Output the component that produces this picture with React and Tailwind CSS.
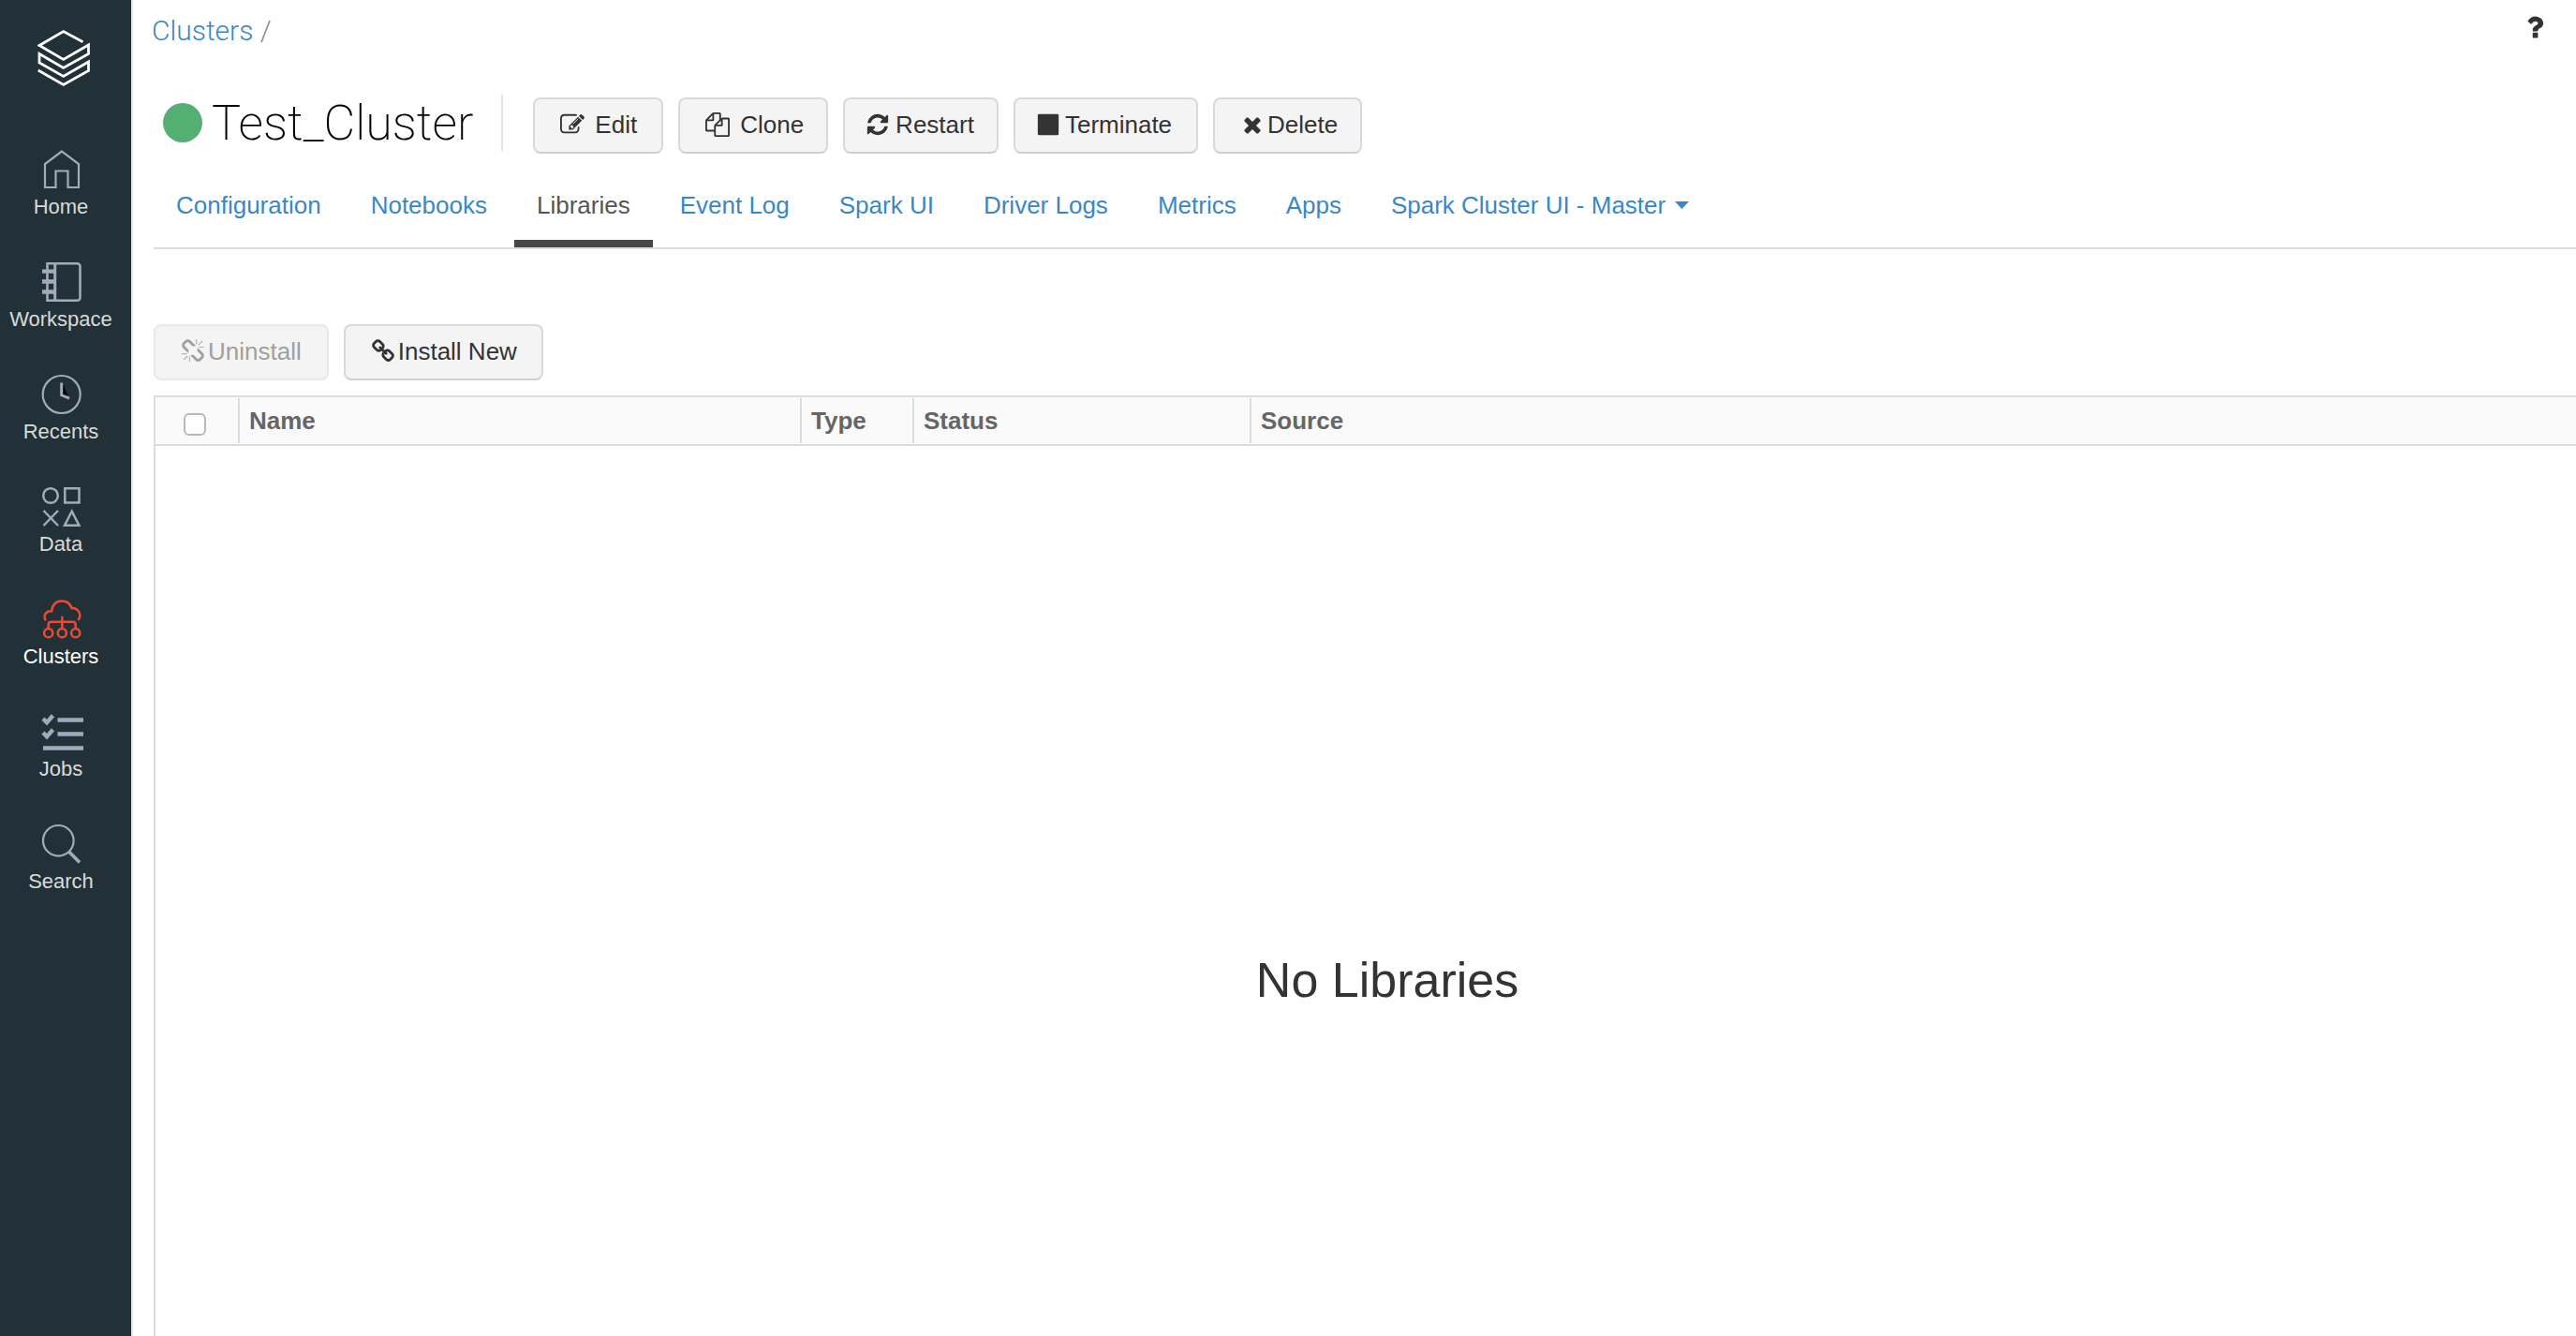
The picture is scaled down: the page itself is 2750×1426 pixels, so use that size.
import React from "react";

/* ---------- icons ---------- */

const glyphs = {
  edit: "M888 1184l116-116-152-152-116 116v56h96v96h56zm440-720q-16-16-33 1l-350 350q-17 17-1 33t33-1l350-350q17-17 1-33zm80 594v190q0 119-84.5 203.5t-203.5 84.5h-832q-119 0-203.5-84.5t-84.5-203.5v-832q0-119 84.5-203.5t203.5-84.5h832q63 0 117 25 15 7 18 23 3 17-9 29l-49 49q-14 14-32 8-23-6-45-6h-832q-66 0-113 47t-47 113v832q0 66 47 113t113 47h832q66 0 113-47t47-113v-126q0-13 9-22l64-64q15-15 35-7t20 29zm-96-738l288 288-672 672h-288v-288zm444 132l-92 92-288-288 92-92q28-28 68-28t68 28l152 152q28 28 28 68t-28 68z",
  clone: "M1696 384q40 0 68 28t28 68v1216q0 40-28 68t-68 28h-960q-40 0-68-28t-28-68v-288h-544q-40 0-68-28t-28-68v-672q0-40 20-88t48-76l408-408q28-28 76-48t88-20h416q40 0 68 28t28 68v328q68-40 128-40h416zm-544 213l-299 299h299v-299zm-640-384l-299 299h299v-299zm196 647l316-316v-416h-384v416q0 40-28 68t-68 28h-416v640h512v-256q0-40 20-88t48-76zm956 804v-1152h-384v416q0 40-28 68t-68 28h-416v640h896z",
  restart: "M1639 1056q0 5-1 7-64 268-268 434.5t-478 166.5q-146 0-282.5-55t-243.5-157l-129 129q-19 19-45 19t-45-19-19-45v-448q0-26 19-45t45-19h448q26 0 45 19t19 45-19 45l-137 137q71 66 161 102t187 36q134 0 250-65t186-179q11-17 53-117 8-23 30-23h192q13 0 22.5 9.5t9.5 22.5zm25-800v448q0 26-19 45t-45 19h-448q-26 0-45-19t-19-45 19-45l138-138q-148-137-349-137-134 0-250 65t-186 179q-11 17-53 117-8 23-30 23h-199q-13 0-22.5-9.5t-9.5-22.5v-7q65-268 270-434.5t480-166.5q146 0 284 55.5t245 156.5l130-129q19-19 45-19t45 19 19 45z",
  stop: "M1664 192v1408q0 26-19 45t-45 19h-1408q-26 0-45-19t-19-45v-1408q0-26 19-45t45-19h1408q26 0 45 19t19 45z",
  times: "M1490 1322q0 40-28 68l-136 136q-28 28-68 28t-68-28l-294-294-294 294q-28 28-68 28t-68-28l-136-136q-28-28-28-68t28-68l294-294-294-294q-28-28-28-68t28-68l136-136q28-28 68-28t68 28l294 294 294-294q28-28 68-28t68 28l136 136q28 28 28 68t-28 68l-294 294 294 294q28 28 28 68z",
  link: "M1520 1216q0-40-28-68l-208-208q-28-28-68-28-42 0-72 32 3 3 19 18.5t21.5 21.5 15 19 13 25.5 3.5 27.5q0 40-28 68t-68 28q-15 0-27.5-3.5t-25.5-13-19-15-21.5-21.5-18.5-19q-33 31-33 73 0 40 28 68l206 207q27 27 68 27 40 0 68-26l147-146q28-28 28-67zm-703-705q0-40-28-68l-206-207q-28-28-68-28-39 0-68 27l-147 146q-28 28-28 67 0 40 28 68l208 208q27 27 68 27 42 0 72-31-3-3-19-18.5t-21.5-21.5-15-19-13-25.5-3.5-27.5q0-40 28-68t68-28q15 0 27.5 3.5t25.5 13 19 15 21.5 21.5 18.5 19q33-31 33-73zm895 705q0 120-85 203l-147 146q-83 83-203 83-121 0-204-85l-206-207q-83-83-83-203 0-123 88-209l-88-88q-86 88-208 88-120 0-204-84l-208-208q-84-84-84-204t85-203l147-146q83-83 203-83 121 0 204 85l206 207q83 83 83 203 0 123-88 209l88 88q86-88 208-88 120 0 204 84l208 208q84 84 84 204z",
  unlink: "M503 1271l-256 256q-10 9-23 9-12 0-23-9-9-10-9-23t9-23l256-256q10-9 23-9t23 9q9 10 9 23t-9 23zm169 41v320q0 14-9 23t-23 9-23-9-9-23v-320q0-14 9-23t23-9 23 9 9 23zm-224-224q0 14-9 23t-23 9h-320q-14 0-23-9t-9-23 9-23 23-9h320q14 0 23 9t9 23zm1264 128q0 120-85 203l-147 146q-83 83-203 83-121 0-204-85l-334-335q-21-21-42-56l239-18 273 274q28 28 68 28.5t68-27.5l147-146q28-28 28-67 0-40-28-68l-274-275 18-239q35 21 56 42l336 336q84 86 84 204zm-617-724l-239 18-273-274q-28-28-68-28-39 0-68 27l-147 146q-28 28-28 67 0 40 28 68l274 274-18 240q-35-21-56-42l-336-336q-84-86-84-204 0-120 85-203l147-146q83-83 203-83 121 0 204 85l334 335q21 21 42 56zm633 84q0 14-9 23t-23 9h-320q-14 0-23-9t-9-23 9-23 23-9h320q14 0 23 9t9 23zm-544-544v320q0 14-9 23t-23 9-23-9-9-23v-320q0-14 9-23t23-9 23 9 9 23zm407 151l-256 256q-11 9-23 9t-23-9q-9-10-9-23t9-23l256-256q10-9 23-9t23 9q9 10 9 23t-9 23z",
  question: "M1088 1256v240q0 16-12 28t-28 12h-240q-16 0-28-12t-12-28v-240q0-16 12-28t28-12h240q16 0 28 12t12 28zm316-600q0 54-15.5 101t-35 76.5-55 59.5-57.5 43.5-61 35.5q-41 23-68.5 65t-27.5 67q0 17-12 32.5t-28 15.5h-240q-15 0-25.5-18.5t-10.5-37.5v-45q0-83 65-156.5t143-108.5q59-27 84-56t25-76q0-42-46.5-74t-107.5-32q-65 0-108 29-35 25-107 115-13 16-31 16-12 0-25-8l-164-125q-13-10-15.5-25t5.5-28q160-266 464-266 80 0 161 31t146 83 106 127.5 41 158.5z",
};

function Glyph({ name, className = "size-[26px]" }) {
  return (
    <svg viewBox="0 0 1792 1792" fill="currentColor" className={className} aria-hidden="true">
      <path d={glyphs[name]} />
    </svg>
  );
}

function NavIcon({ children }) {
  return (
    <svg
      viewBox="0 0 44 42"
      fill="none"
      stroke="currentColor"
      strokeWidth="2.2"
      className="h-[42px] w-11 overflow-visible"
      aria-hidden="true"
    >
      {children}
    </svg>
  );
}

const icons = {
  home: <path d="M23 1.500L5 15v25h11.500V22.500h13V40H41V15z" />,
  workspace: (
    <>
      <path d="M7.500 1.300H39.500a3 3 0 0 1 3 3V37.700a3 3 0 0 1-3 3H7.500z" strokeWidth="2.600" />
      <path d="M15.700 0v42" strokeWidth="3" />
      <path d="M2 9.600h14M2 20.500h14M2 31.500h14" strokeWidth="4.400" />
    </>
  ),
  recents: (
    <>
      <circle cx="22.700" cy="21" r="20" />
      <path d="M24 9.500l5.800 13.500-6-2z" fill="#000" stroke="none" />
      <path d="M22.700 8.500v13.300l8.400 3.400" strokeWidth="3" />
    </>
  ),
  data: (
    <g strokeWidth="2.500">
      <circle cx="11" cy="9" r="7.800" />
      <path d="M26.300 1.300h15.200v15.200H26.300z" />
      <path d="M3.500 25l15.500 16M19 25L3.500 41" />
      <path d="M33.700 25.800L26 40.700h15.400z" />
    </g>
  ),
  clusters: (
    <g strokeWidth="2.500">
      <path d="M5.800 22.300C2.800 17 6 12 12 12.400C13 5.500 17 1.500 23 1.500C28 1.500 32 4.500 33.500 9C38 8.500 42 12 42.400 16.500C42.500 19 41.700 20.500 40.300 22" />
      <path d="M23.300 17.700v13M8.700 31v-4.300q0-3 3-3h23q3 0 3 3V31" />
      <circle cx="8.700" cy="35.700" r="4.600" />
      <circle cx="23.300" cy="35.700" r="4.600" />
      <circle cx="37.700" cy="35.700" r="4.600" />
    </g>
  ),
  jobs: (
    <>
      <path d="M18.500 8.500H46M18.500 23.500H46M3 38.500H46" strokeWidth="4.600" />
      <path d="M3 7l4 4.200 6.500-7.500M3 22l4 4.200 6.500-7.500" strokeWidth="4.400" />
    </>
  ),
  search: (
    <>
      <circle cx="19.300" cy="17.300" r="16.300" />
      <path d="M30.800 29.200L42 40.500" strokeWidth="3.600" />
    </>
  ),
};

/* ---------- data ---------- */

const navItems = [
  { id: "home", label: "Home" },
  { id: "workspace", label: "Workspace" },
  { id: "recents", label: "Recents" },
  { id: "data", label: "Data" },
  { id: "clusters", label: "Clusters", active: true },
  { id: "jobs", label: "Jobs" },
  { id: "search", label: "Search" },
];

const tabs = [
  { label: "Configuration" },
  { label: "Notebooks" },
  { label: "Libraries", active: true },
  { label: "Event Log" },
  { label: "Spark UI" },
  { label: "Driver Logs" },
  { label: "Metrics" },
  { label: "Apps" },
  { label: "Spark Cluster UI - Master", menu: true },
];

const actions = [
  { label: "Edit", icon: "edit", spacing: "pl-[27px] pr-[26px] gap-[11px]" },
  { label: "Clone", icon: "clone", spacing: "pl-[27px] pr-6 gap-[11px]" },
  { label: "Restart", icon: "restart", spacing: "pl-[22px] pr-6 gap-[6px]" },
  { label: "Terminate", icon: "stop", spacing: "pl-[22px] pr-[26px] gap-[5px]" },
  { label: "Delete", icon: "times", spacing: "pl-[27px] pr-6 gap-[3px]" },
];

/* ---------- components ---------- */

function Button({ icon, spacing, disabled, children }) {
  return (
    <button
      type="button"
      disabled={disabled}
      className={
        "flex h-[60px] items-center whitespace-nowrap rounded-lg border-2 bg-[#f4f4f4] pb-[2px] text-[26px] leading-[30px] " +
        (disabled
          ? "border-[#e8e8e8] text-[#a0a0a0] "
          : "border-[#d9d9d9] border-b-[#cfcfcf] text-[#333333] ") +
        spacing
      }
    >
      <Glyph name={icon} />
      <span>{children}</span>
    </button>
  );
}

function Sidebar() {
  return (
    <aside className="w-[142px] shrink-0 border-r-2 border-[#e6e7ea] bg-[#223138]">
      <a href="#" aria-label="Workspace start" className="ml-10 mt-8 block w-14">
        <svg viewBox="0 0 56 60" fill="none" stroke="#fff" strokeWidth="2.800" className="h-[60px] w-14">
          <path d="M48.500 12.800L27.700 1.600L2 16.500L27.700 31.500L54.500 16v9.500L27.700 40.500L2 25.500v9.500L27.700 49.500L54.500 34v9.500L27.700 58.400L.8 43" />
        </svg>
      </a>
      <nav className="mt-[68px] flex w-[130px] flex-col gap-[47px]">
        {navItems.map((item) => (
          <a
            key={item.id}
            href="#"
            className={
              "flex flex-col items-center gap-[7px] " + (item.active ? "text-[#ee4a31]" : "text-[#a1abbc]")
            }
          >
            <NavIcon>{icons[item.id]}</NavIcon>
            <span className={"text-[22px] leading-6 " + (item.active ? "text-white" : "text-[#d8dbd9]")}>
              {item.label}
            </span>
          </a>
        ))}
      </nav>
    </aside>
  );
}

function Tabs() {
  return (
    <nav className="ml-[22px] mt-[31px] flex gap-[5px] border-b-2 border-[#dddddd]">
      {tabs.map((tab) => (
        <a
          key={tab.label}
          href="#"
          className={
            "flex h-[69px] items-start gap-[10px] whitespace-nowrap border-b-8 px-6 pt-[9px] text-[26px] leading-[30px] " +
            (tab.active ? "border-[#464644] text-[#555555]" : "border-transparent text-[#3a87c8]")
          }
        >
          {tab.label}
          {tab.menu && (
            <svg viewBox="0 0 15 8" fill="currentColor" className="mt-[11px] h-2 w-[15px]" aria-hidden="true">
              <path d="M0 0h15L7.500 8z" />
            </svg>
          )}
        </a>
      ))}
    </nav>
  );
}

function HeaderCell({ width, children }) {
  return (
    <th className={"p-0 text-left font-bold " + width}>
      <div className="h-12 border-l-2 border-[#dddddd] pl-[10px] leading-[48px]">{children}</div>
    </th>
  );
}

export default function App() {
  return (
    <div className="flex min-h-screen bg-white font-['Liberation_Sans',Arial,sans-serif] text-[#333333]">
      <Sidebar />
      <main className="flex min-w-0 flex-1 flex-col overflow-hidden">
        <header className="flex h-[53px] items-start justify-between pl-5 pr-7 pt-[13px]">
          <p className="font-['Roboto','Liberation_Sans',sans-serif] text-[30px] font-light leading-10 text-[#888888]">
            <a href="#" className="text-[#3a87c8]">Clusters</a> /
          </p>
          <button type="button" aria-label="Help">
            <Glyph name="question" className="size-8" />
          </button>
        </header>

        <section className="mt-12 flex items-start">
          <div className="flex h-[60px] items-center border-r-2 border-[#e5e5e5] pl-8 pr-[30px]">
            <span className="size-[42px] rounded-full bg-[#54b072]" />
            <h1 className="ml-[10px] pt-[2px] font-['Roboto','Liberation_Sans',sans-serif] text-[52px] font-extralight leading-[60px] text-black">
              Test_Cluster
            </h1>
          </div>
          <div className="ml-8 mt-[3px] flex gap-4">
            {actions.map((a) => (
              <Button key={a.label} icon={a.icon} spacing={a.spacing}>
                {a.label}
              </Button>
            ))}
          </div>
        </section>

        <Tabs />

        <div className="ml-[22px] mt-20 flex gap-4">
          <Button icon="unlink" spacing="px-[27px] gap-[3px]" disabled>
            Uninstall
          </Button>
          <Button icon="link" spacing="pl-[27px] pr-[26px] gap-[3px]">
            Install New
          </Button>
        </div>

        <section className="-mr-[46px] ml-[22px] mt-4 flex flex-1 flex-col border-l-2 border-t-2 border-[#dddddd]">
          <table className="w-full table-fixed border-separate border-spacing-0 border-b-2 border-[#dddddd] bg-[#fafafa] text-[26px] text-[#666666]">
            <thead>
              <tr className="h-[50px]">
                <th className="w-[88px] p-0">
                  <input
                    type="checkbox"
                    aria-label="Select all libraries"
                    className="ml-[30px] mt-2 block size-6 appearance-none rounded-md border-2 border-[#b8b8b8] bg-white"
                  />
                </th>
                <HeaderCell width="w-[600px]">Name</HeaderCell>
                <HeaderCell width="w-[120px]">Type</HeaderCell>
                <HeaderCell width="w-[360px]">Status</HeaderCell>
                <HeaderCell width="w-auto">Source</HeaderCell>
              </tr>
            </thead>
          </table>
          <div className="flex flex-1 flex-col items-center pt-[540px]">
            <p className="text-[52px] leading-[60px]">No Libraries</p>
          </div>
        </section>
      </main>
    </div>
  );
}
